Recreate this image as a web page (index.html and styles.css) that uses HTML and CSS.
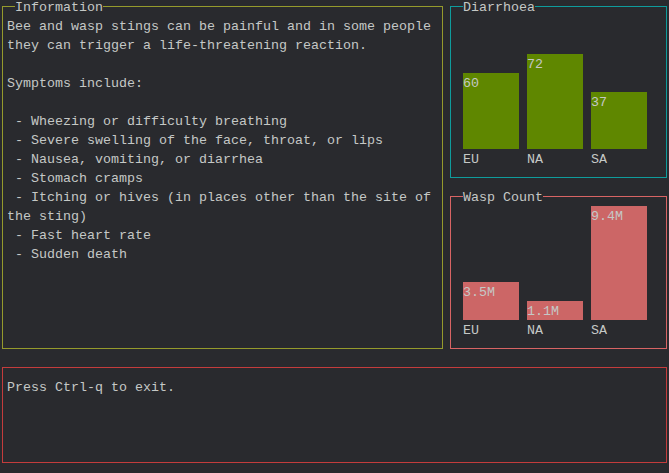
FILE: index.html
```html
<!DOCTYPE html>
<html>
<head>
<meta charset="utf-8">
<link rel="stylesheet" href="styles.css">
</head>
<body>
<div class="screen">
  <div class="top">
    <section class="box info">
      <span class="title">Information</span>
      <div class="text">Bee and wasp stings can be painful and in some people
they can trigger a life-threatening reaction.

Symptoms include:

 - Wheezing or difficulty breathing
 - Severe swelling of the face, throat, or lips
 - Nausea, vomiting, or diarrhea
 - Stomach cramps
 - Itching or hives (in places other than the site of
the sting)
 - Fast heart rate
 - Sudden death</div>
    </section>
    <div class="side">
      <section class="box diarrhoea">
        <span class="title">Diarrhoea</span>
        <div class="chart">
          <div class="group"><div class="area"><div class="bar green" style="height:76px">60</div></div><div class="label">EU</div></div>
          <div class="group"><div class="area"><div class="bar green" style="height:95px">72</div></div><div class="label">NA</div></div>
          <div class="group"><div class="area"><div class="bar green" style="height:57px">37</div></div><div class="label">SA</div></div>
        </div>
      </section>
      <section class="box wasp">
        <span class="title">Wasp Count</span>
        <div class="chart">
          <div class="group"><div class="area short"><div class="bar red" style="height:38px">3.5M</div></div><div class="label">EU</div></div>
          <div class="group"><div class="area short"><div class="bar red" style="height:19px">1.1M</div></div><div class="label">NA</div></div>
          <div class="group"><div class="area short"><div class="bar red" style="height:114px">9.4M</div></div><div class="label">SA</div></div>
        </div>
      </section>
    </div>
  </div>
  <section class="box bottom">
    <div class="text">Press Ctrl-q to exit.</div>
  </section>
</div>
</body>
</html>
```
FILE: styles.css
```css
html, body {
  margin: 0;
  padding: 0;
  background: #292a2e;
  overflow: hidden;
}
body {
  width: 669px;
  height: 473px;
  color: #c5c8c6;
  font-family: "Liberation Mono", "DejaVu Sans Mono", monospace;
  font-size: 13.333px;
  line-height: 19px;
}
.screen {
  padding: 6px 0 0 2px;
}
.top {
  display: flex;
  gap: 7px;
}
.side {
  display: flex;
  flex-direction: column;
  gap: 18px;
}
.box {
  position: relative;
  box-sizing: border-box;
  border: 1px solid;
}
.title {
  position: absolute;
  top: -10px;
  left: 12px;
  box-sizing: border-box;
  height: 19px;
  padding-top: 1px;
  line-height: 19px;
  background: #292a2e;
  white-space: pre;
}
.info {
  width: 441px;
  height: 343px;
  border-color: #959a2c;
}
.diarrhoea {
  width: 217px;
  height: 172px;
  border-color: #0f9c9c;
}
.wasp {
  width: 217px;
  height: 153px;
  border-color: #d86464;
}
.bottom {
  margin-top: 18px;
  width: 665px;
  height: 96px;
  border-color: #c43c3c;
}
.text {
  white-space: pre;
  padding: 10px 0 0 4px;
}
.chart {
  display: flex;
  gap: 8px;
  padding: 9px 0 0 12px;
}
.group {
  width: 56px;
  display: flex;
  flex-direction: column;
}
.area {
  height: 133px;
  display: flex;
  flex-direction: column;
  justify-content: flex-end;
}
.area.short {
  height: 114px;
}
.bar {
  box-sizing: border-box;
  padding-top: 1px;
  line-height: 19px;
  overflow: hidden;
  white-space: pre;
}
.green {
  background: #5f8700;
}
.red {
  background: #cc6666;
}
.label {
  box-sizing: border-box;
  height: 19px;
  padding-top: 1px;
}
```
